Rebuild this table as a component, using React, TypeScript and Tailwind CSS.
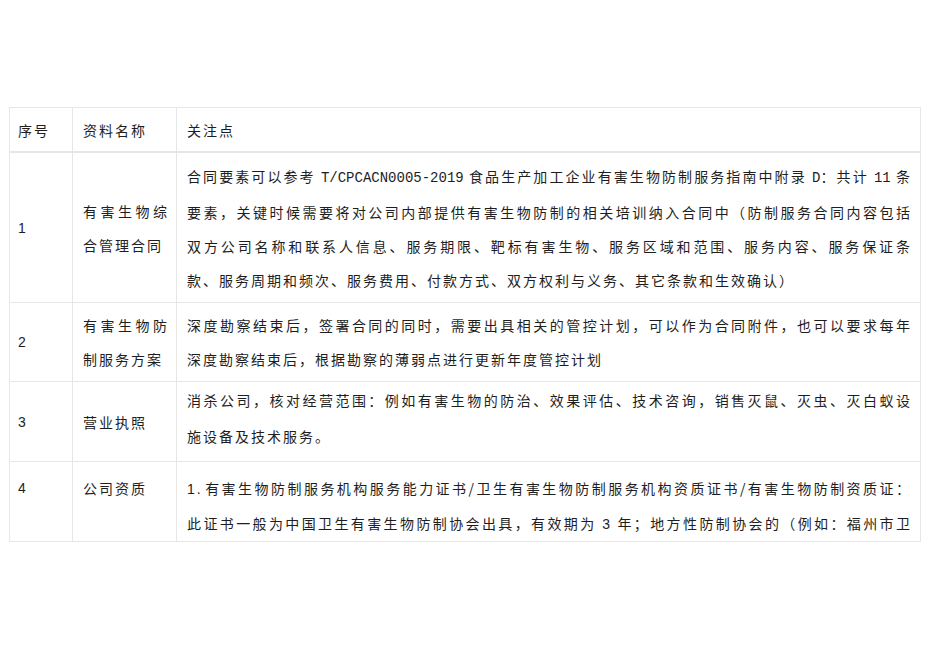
const font = { fontFamily: '"Noto Sans CJK SC", "Liberation Sans", sans-serif' };

const Mono = ({ children }: { children: string }) => (
  <span className="font-['Liberation_Mono',monospace] tracking-normal">{children}</span>
);

const Line = ({ children, full }: { children: React.ReactNode; full?: boolean }) => (
  <div className={full ? "text-justify [text-align-last:justify]" : ""}>{children}</div>
);

const App = () => {
  return (
    <div className="w-[950px] h-[672px] bg-white text-[#1e1e1e] text-[14px] tracking-[2px] pt-[107px] pl-[9px]" style={font}>
      <div className="w-[912px] border border-[#e6e6e6] border-b-0">
        {/* header */}
        <div className="grid grid-cols-[63px_104px_1fr] h-[45px] border-b-2 border-[#e6e6e6] leading-[34px]">
          <div className="border-r border-[#e6e6e6] pl-[8px] flex items-center">序号</div>
          <div className="border-r border-[#e6e6e6] pl-[10px] flex items-center">资料名称</div>
          <div className="pl-[10px] flex items-center">关注点</div>
        </div>

        {/* row 1 */}
        <div className="grid grid-cols-[63px_104px_1fr] h-[150px] border-b border-[#e6e6e6] leading-[34px]">
          <div className="border-r border-[#e6e6e6] pl-[8px] flex items-center font-['Liberation_Sans',sans-serif]">1</div>
          <div className="border-r border-[#e6e6e6] pl-[10px] pr-[7px] flex flex-col justify-center">
            <Line full>有害生物综</Line>
            <Line>合管理合同</Line>
          </div>
          <div className="pl-[10px] pr-[8px] flex flex-col justify-center">
            <Line full>合同要素可以参考 <Mono>T/CPCACN0005-2019</Mono> 食品生产加工企业有害生物防制服务指南中附录 <Mono>D</Mono>：共计 <Mono>11</Mono> 条</Line>
            <Line full>要素，关键时候需要将对公司内部提供有害生物防制的相关培训纳入合同中（防制服务合同内容包括</Line>
            <Line full>双方公司名称和联系人信息、服务期限、靶标有害生物、服务区域和范围、服务内容、服务保证条</Line>
            <Line>款、服务周期和频次、服务费用、付款方式、双方权利与义务、其它条款和生效确认）</Line>
          </div>
        </div>

        {/* row 2 */}
        <div className="grid grid-cols-[63px_104px_1fr] h-[79px] border-b border-[#e6e6e6] leading-[34px]">
          <div className="border-r border-[#e6e6e6] pl-[8px] flex items-center font-['Liberation_Sans',sans-serif]">2</div>
          <div className="border-r border-[#e6e6e6] pl-[10px] pr-[7px] flex flex-col justify-center">
            <Line full>有害生物防</Line>
            <Line>制服务方案</Line>
          </div>
          <div className="pl-[10px] pr-[8px] flex flex-col justify-center">
            <Line full>深度勘察结束后，签署合同的同时，需要出具相关的管控计划，可以作为合同附件，也可以要求每年</Line>
            <Line>深度勘察结束后，根据勘察的薄弱点进行更新年度管控计划</Line>
          </div>
        </div>

        {/* row 3 */}
        <div className="grid grid-cols-[63px_104px_1fr] h-[80px] border-b border-[#e6e6e6] leading-[36px]">
          <div className="border-r border-[#e6e6e6] pl-[8px] flex items-center font-['Liberation_Sans',sans-serif]">3</div>
          <div className="border-r border-[#e6e6e6] pl-[10px] pr-[7px] flex items-center">营业执照</div>
          <div className="pl-[10px] pr-[8px]">
            <Line full>消杀公司，核对经营范围：例如有害生物的防治、效果评估、技术咨询，销售灭鼠、灭虫、灭白蚁设</Line>
            <Line>施设备及技术服务。</Line>
          </div>
        </div>

        {/* row 4, cut off by page end */}
        <div className="grid grid-cols-[63px_104px_1fr] h-[80px] border-b border-[#e6e6e6] leading-[34px] overflow-hidden">
          <div className="border-r border-[#e6e6e6] pl-[8px] pt-[9px] font-['Liberation_Sans',sans-serif]">4</div>
          <div className="border-r border-[#e6e6e6] pl-[10px] pr-[7px] pt-[9px]">公司资质</div>
          <div className="pl-[10px] pr-[8px] pt-[9px]">
            <Line full><span className="font-['Liberation_Sans',sans-serif] tracking-[2px] mr-[2px]">1.</span>有害生物防制服务机构服务能力证书/卫生有害生物防制服务机构资质证书/有害生物防制资质证：</Line>
            <Line full>此证书一般为中国卫生有害生物防制协会出具，有效期为 <span className="font-['Liberation_Sans',sans-serif]">3</span> 年；地方性防制协会的（例如：福州市卫</Line>
          </div>
        </div>
      </div>
    </div>
  );
};

export default App;
